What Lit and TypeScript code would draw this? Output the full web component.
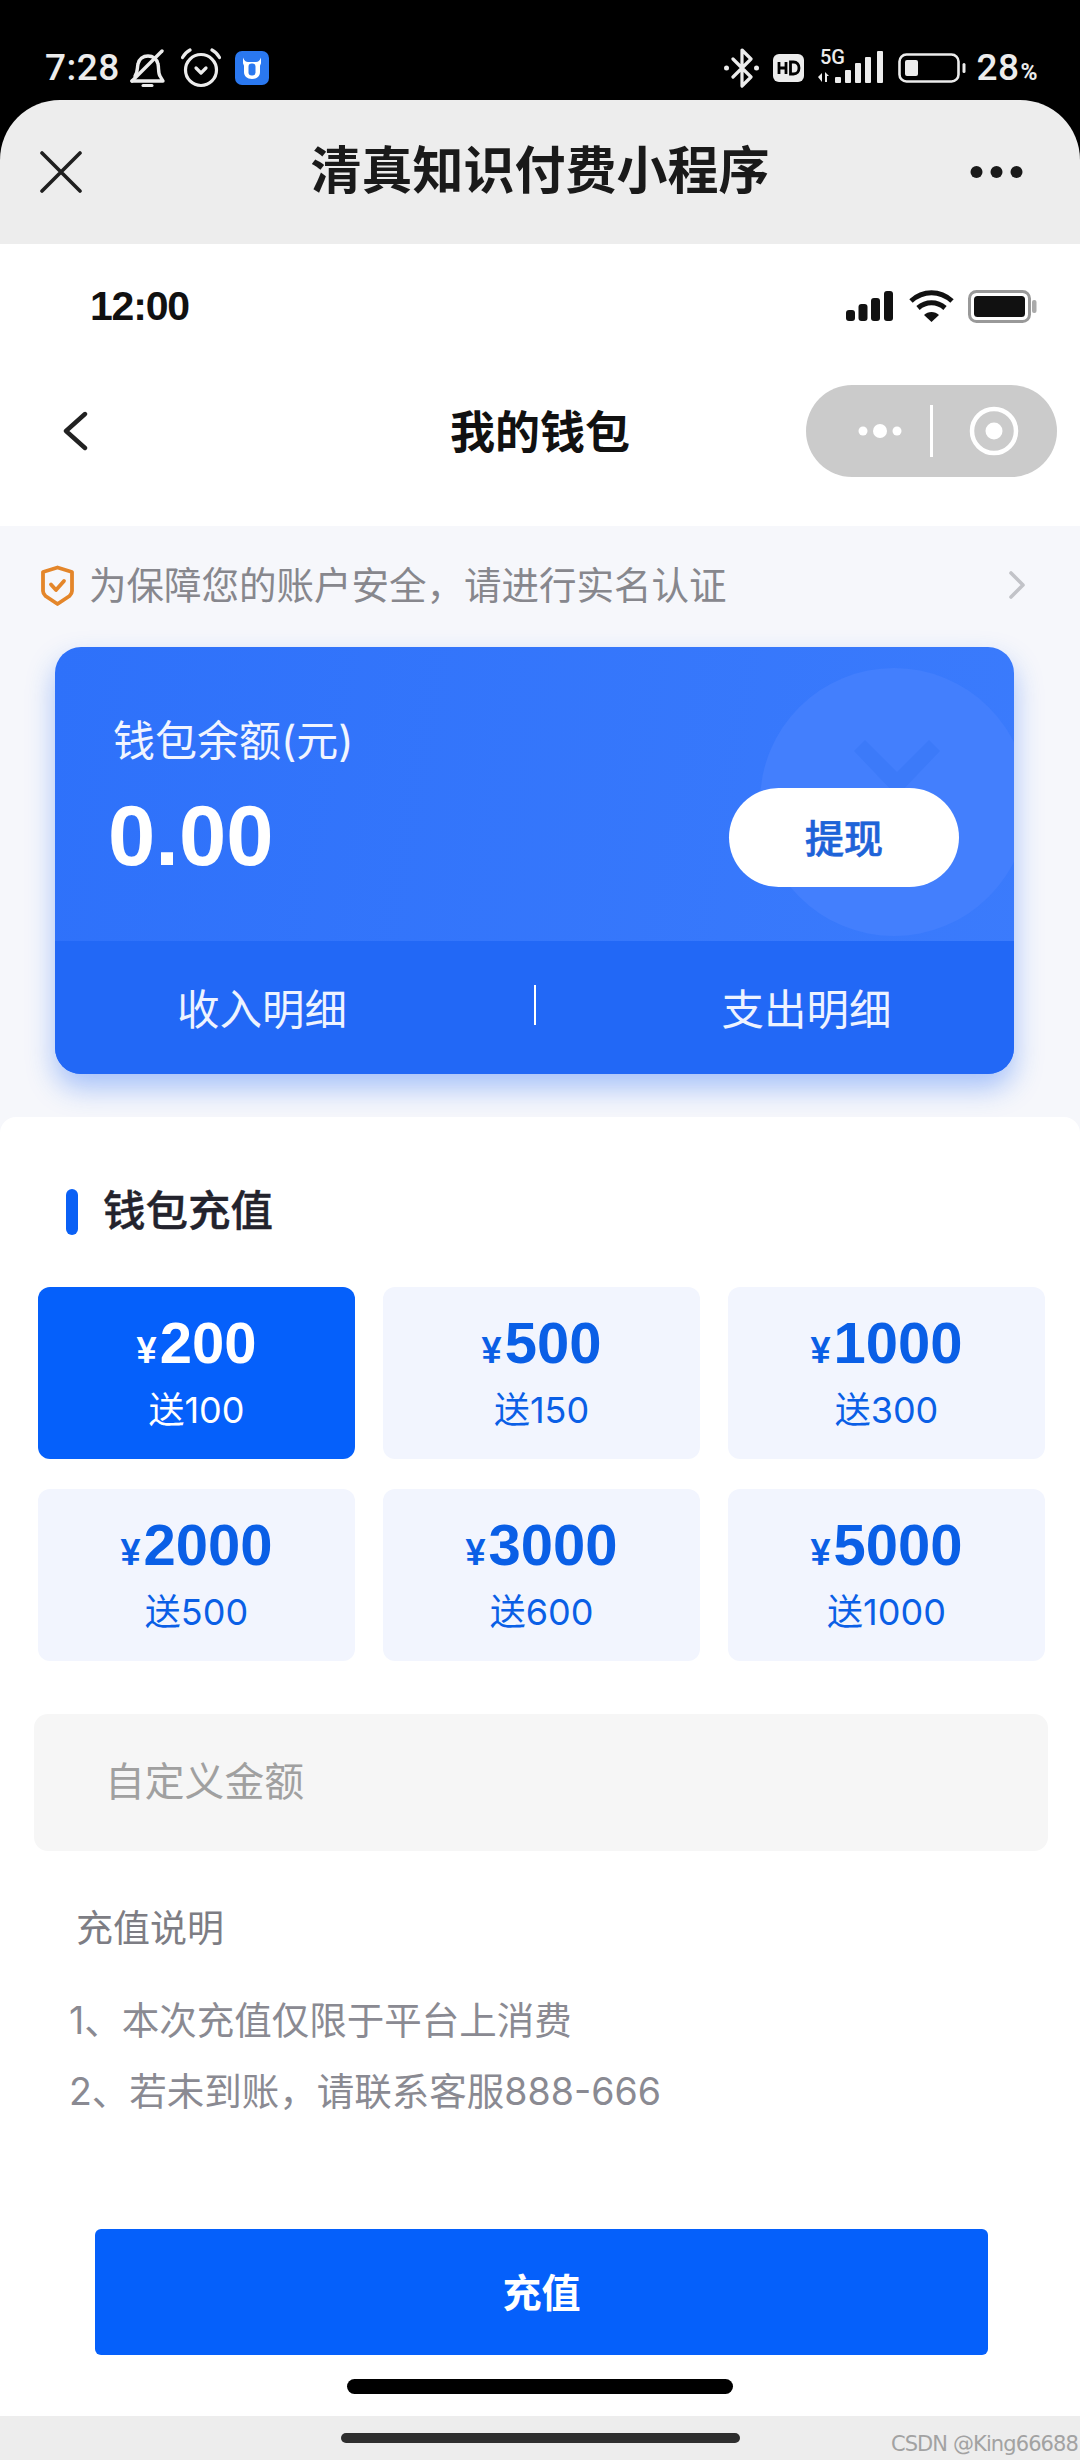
import { LitElement, html, css, svg } from "lit";
import { customElement } from "lit/decorators.js";

const tiles = [
  { amount: "200", gift: "送100", active: true },
  { amount: "500", gift: "送150" },
  { amount: "1000", gift: "送300" },
  { amount: "2000", gift: "送500" },
  { amount: "3000", gift: "送600" },
  { amount: "5000", gift: "送1000" },
];

@customElement("app-root")
export class AppRoot extends LitElement {
  static styles = css`
    :host { display: block; width: 1080px; height: 2460px; overflow: hidden; font-family: "Liberation Sans", "Noto Sans CJK SC", sans-serif; }
    * { box-sizing: border-box; }
    svg { display: block; flex: none; }
    .page { position: relative; height: 2460px; background: #000; display: flex; flex-direction: column; }

    .os { height: 100px; flex: none; display: flex; align-items: flex-start; padding-top: 48px; color: #ececec; }
    .os-time { font: 500 37px/40px Roboto, sans-serif; margin: 0 0 0 45px; width: 81px; letter-spacing: .5px; }
    .os-bell { margin-left: 4px; }
    .os-alarm { margin-left: 15px; }
    .os-app { margin: 3px 0 0 14px; }
    .os-spacer { flex: 1; }
    .os-bt { margin-right: 13px; }
    .os-hd { margin: 6px 12px 0 0; }
    .os-net { margin: -4px 14px 0 0; }
    .os-batt { margin: 5px 9px 0 0; }
    .os-pct { font: 500 37px/40px Roboto, sans-serif; margin: 0 42px 0 0; letter-spacing: .5px; display: flex; align-items: baseline; }
    .os-pct span { font-size: 23px; font-weight: 700; margin-left: 1px; }

    .sheet { flex: 1; background: #ededed; border-radius: 60px 60px 0 0; overflow: hidden; display: flex; flex-direction: column; }
    .sheet-head { height: 144px; flex: none; display: grid; grid-template-columns: 1fr auto 1fr; align-items: center; padding: 0 40px; }
    .sheet-title { font-size: 51px; font-weight: 700; color: #1a1a1a; line-height: 60px; }
    .sheet-more { justify-self: end; margin-right: 17px; }

    .mini { height: 2172px; flex: none; background: #fff; display: flex; flex-direction: column; }
    .mini-status { height: 124px; flex: none; display: flex; align-items: center; padding: 0 43px 0 90px; }
    .mini-time { font-size: 41px; font-weight: 700; letter-spacing: -1.2px; color: #111; flex: 1; line-height: 44px; }
    .mini-wifi { margin: 0 14px 0 16px; }

    .nav { margin-top: 17px; height: 92px; flex: none; display: grid; grid-template-columns: 1fr auto 1fr; align-items: center; padding: 0 23px; }
    .nav-back { margin-left: 40px; }
    .nav-title { font-size: 45px; font-weight: 700; color: #111; line-height: 54px; margin-top: 5px; }
    .capsule { justify-self: end; width: 251px; height: 92px; border-radius: 46px; background: #cbcbcb; display: flex; align-items: center; padding-left: 52px; }
    .capsule-line { width: 3px; height: 52px; background: #fff; margin: 0 0 0 28px; }
    .capsule-ring { margin-left: 36px; }

    .wallet { height: 607px; flex: none; margin-top: 49px; background: #f6f7fb; display: flex; flex-direction: column; }
    .tip { height: 118px; flex: none; display: flex; align-items: center; padding: 0 54px 0 41px; color: #87878d; font-size: 37.5px; }
    .tip-text { flex: 1; margin-left: 15px; line-height: 44px; padding-top: 2px; }
    .card { position: relative; margin: 3px 66px 0 55px; height: 427px; border-radius: 26px; background: linear-gradient(100deg, #2e71fa, #3b7bfc); color: #fff; display: flex; flex-direction: column; box-shadow: 0 14px 28px rgba(33, 104, 246, .38); }
    .card-top { position: relative; height: 294px; flex: none; overflow: hidden; border-radius: 26px 26px 0 0; display: flex; align-items: flex-end; justify-content: space-between; padding: 0 55px 54px 53px; }
    .deco { position: absolute; left: 705px; top: 21px; width: 268px; height: 268px; border-radius: 50%; background: #437ffd; }
    .deco-mark { position: absolute; left: 798px; top: 93px; }
    .card-info { position: relative; padding-bottom: 3px; }
    .card-label { font-family: Inter, "Noto Sans CJK SC", sans-serif; font-size: 42px; line-height: 48px; margin: 0 0 23px 5px; color: #f1f5ff; }
    .card-amount { font-size: 85px; font-weight: 700; line-height: 96px; }
    .withdraw { position: relative; width: 230px; height: 99px; border-radius: 50px; background: #fff; color: #1e63d8; font-size: 39px; font-weight: 500; -webkit-text-stroke: .7px #1e63d8; display: flex; align-items: center; justify-content: center; padding-bottom: 4px; }
    .card-foot { flex: 1; background: #2268f6; border-radius: 0 0 26px 26px; display: grid; grid-template-columns: 1fr 2px 1fr; font-size: 42.5px; color: #eef3ff; position: relative; }
    .foot-link { display: flex; align-items: center; padding-bottom: 3px; }
    .foot-left { justify-content: flex-start; padding-left: 122px; }
    .foot-right { justify-content: flex-start; padding-left: 186px; }
    .foot-line { align-self: start; width: 2px; height: 40px; background: #fff; margin-top: 44px; }

    .panel { position: relative; flex: 1; margin-top: -16px; background: #fff; border-radius: 16px 16px 0 0; display: flex; flex-direction: column; padding-top: 72px; }
    .section { display: flex; align-items: center; height: 46px; padding-left: 66px; }
    .section-bar { width: 12px; height: 46px; border-radius: 6px; background: #0a60f5; margin-right: 25px; }
    .section-text { font-size: 42.5px; font-weight: 500; -webkit-text-stroke: .4px #23232d; color: #23232d; line-height: 46px; }
    .tiles { margin: 52px 34px 0 38px; display: grid; grid-template-columns: repeat(3, 317px); grid-auto-rows: 172px; column-gap: 28px; row-gap: 30px; }
    .tile { border-radius: 12px; background: #f2f5fe; color: #0a5fe6; display: flex; flex-direction: column; align-items: center; padding-top: 23px; }
    .tile.active { background: #0560fb; color: #fff; }
    .tile-price { display: flex; align-items: baseline; height: 66px; line-height: 66px; font-size: 58px; font-weight: 700; }
    .tile-price span { font-size: 36px; margin-right: 3px; }
    .tile-gift { margin-top: 12px; font-family: Inter, "Noto Sans CJK SC", sans-serif; font-size: 36px; line-height: 44px; }

    .field { margin: 53px 32px 0 34px; height: 137px; flex: none; border-radius: 14px; background: #f6f6f6; color: #a0a0a0; font-size: 39.8px; display: flex; align-items: center; padding: 0 0 8px 71px; }
    .notes { padding-left: 76px; margin-top: 56px; height: 46px; font-size: 37px; line-height: 46px; color: #7d7d84; }
    .rule { margin-top: 44px; padding-left: 69px; font-family: Inter, "Noto Sans CJK SC", sans-serif; font-size: 37.5px; line-height: 48px; color: #8a8a92; }
    .rule + .rule { margin-top: 23px; }
    .pay { margin: 113px 92px 0 95px; height: 126px; flex: none; border-radius: 6px; background: #0560fb; color: #fff; font-size: 39px; font-weight: 700; display: flex; align-items: center; justify-content: center; padding-bottom: 4px; }
    .home { margin: 24px auto 0; width: 386px; height: 15px; border-radius: 8px; background: #000; }

    .sheet-foot { height: 44px; flex: none; display: flex; justify-content: center; padding: 17px 0 0 0; }
    .sheet-handle { width: 399px; height: 10px; border-radius: 5px; background: #2e2e2e; }
    .mark { position: absolute; right: 2px; bottom: 4px; font-size: 21px; line-height: 24px; color: #a2a2a2; font-family: "DejaVu Sans", sans-serif; letter-spacing: -.9px; }
  `;

  render() {
    const white = "#ececec";
    return html`<div class="page">
      <div class="os">
        <div class="os-time">7:28</div>
        <svg class="os-bell" width="36" height="40" viewBox="0 0 36 40" fill="none" stroke="${white}" stroke-width="3.4" stroke-linecap="round" stroke-linejoin="round">
          ${svg`<path d="M2 33h31l-3-5c-2-3-1-8-2-12-1-5-5-8-10-8S9 11 8 16c-1 4 0 8-3 12"/><path d="M2 33L32 3"/><path d="M13 37.500h9" stroke-width="3"/>`}
        </svg>
        <svg class="os-alarm" width="40" height="40" viewBox="0 0 40 40" fill="none" stroke="${white}" stroke-width="3.2" stroke-linecap="round" stroke-linejoin="round">
          ${svg`<circle cx="20" cy="22" r="15.500"/><path d="M1.500 9.500C3.500 6 6 3.500 9 2"/><path d="M38.500 9.500C36.500 6 34 3.500 31 2"/><path d="M15 20l5 5 5-5"/>`}
        </svg>
        <svg class="os-app" width="34" height="34" viewBox="0 0 34 34">
          ${svg`<rect width="34" height="34" rx="7" fill="#2a78f0"/><path d="M8 6.500c1 3 3 4.500 5 4.500h8c2 0 4-1.500 5-4.500v5.500c0 1-1 2-1 3v6c0 4-3 7-8 7s-8-3-8-7v-6c0-1-1-2-1-3z" fill="#fff"/><rect x="13.500" y="12.500" width="7" height="12" rx="3.200" fill="#2a78f0"/>`}
        </svg>
        <div class="os-spacer"></div>
        <svg class="os-bt" width="37" height="40" viewBox="0 0 37 40" fill="none" stroke="${white}" stroke-width="3.2" stroke-linecap="round" stroke-linejoin="round">
          ${svg`<path d="M10 11l18 18-9 9V2l9 9-18 18"/><circle cx="3.500" cy="20" r="2.500" fill="${white}" stroke="none"/><circle cx="33.500" cy="20" r="2.500" fill="${white}" stroke="none"/>`}
        </svg>
        <svg class="os-hd" width="31" height="28" viewBox="0 0 31 28">
          ${svg`<rect width="31" height="28" rx="6" fill="${white}"/><path d="M6 8v12M6 14h7M13 8v12M17.500 8v12h3c3.500 0 5.500-2.500 5.500-6s-2-6-5.500-6z" fill="none" stroke="#000" stroke-width="2.800"/>`}
        </svg>
        <svg class="os-net" width="68" height="40" viewBox="0 0 68 40" fill="${white}">
          ${svg`<text x="4" y="20" font-family="Roboto, sans-serif" font-size="20" font-weight="500">5G</text>
          <path d="M2 33l4-4v9zM9 28l4 4h-2v6H9z"/>
          <rect x="19" y="33" width="6" height="6" rx="1"/><rect x="29" y="26" width="6" height="13" rx="1"/><rect x="39" y="19" width="6" height="20" rx="1"/><rect x="49" y="13" width="6" height="26" rx="1"/><rect x="61" y="7" width="6" height="32" rx="1"/>`}
        </svg>
        <svg class="os-batt" width="69" height="30" viewBox="0 0 69 30">
          ${svg`<rect x="1.500" y="1.500" width="59" height="27" rx="7" fill="none" stroke="${white}" stroke-width="2.600"/><rect x="7" y="7" width="13" height="16" rx="2" fill="${white}"/><rect x="64.500" y="10" width="3" height="10" rx="1.500" fill="${white}"/>`}
        </svg>
        <div class="os-pct">28<span>%</span></div>
      </div>

      <div class="sheet">
        <div class="sheet-head">
          <svg width="42" height="42" viewBox="0 0 42 42" fill="none" stroke="#1f1f1f" stroke-width="3.600" stroke-linecap="round">
            ${svg`<path d="M2 2l38 38M40 2L2 40"/>`}
          </svg>
          <div class="sheet-title">清真知识付费小程序</div>
          <svg class="sheet-more" width="53" height="14" viewBox="0 0 53 14" fill="#1a1a1a">
            ${svg`<circle cx="6.500" cy="7" r="6"/><circle cx="26.500" cy="7" r="6"/><circle cx="46.500" cy="7" r="6"/>`}
          </svg>
        </div>

        <div class="mini">
          <div class="mini-status">
            <div class="mini-time">12:00</div>
            <svg width="47" height="30" viewBox="0 0 47 30" fill="#111">
              ${svg`<rect x="0" y="19" width="9" height="11" rx="3"/><rect x="12.500" y="13" width="9" height="17" rx="3"/><rect x="25" y="7" width="9" height="23" rx="3"/><rect x="38" y="0" width="9" height="30" rx="3"/>`}
            </svg>
            <svg class="mini-wifi" width="45" height="32" viewBox="0 0 45 32" fill="none" stroke="#111" stroke-width="5">
              ${svg`<path d="M2 11C14 0 31 0 43 11"/><path d="M9 18c8-7 19-7 27 0"/><path d="M15 25l7.500 7 7.500-7c-4-4-11-4-15 0z" fill="#111" stroke="none"/>`}
            </svg>
            <svg width="69" height="33" viewBox="0 0 69 33">
              ${svg`<rect x="1.500" y="1.500" width="60" height="30" rx="7" fill="#fff" stroke="#999" stroke-width="3"/><rect x="6" y="6" width="51" height="21" rx="3.500" fill="#111"/><rect x="64" y="10" width="4.500" height="13" rx="2" fill="#aaa"/>`}
            </svg>
          </div>

          <div class="nav">
            <svg class="nav-back" width="25" height="40" viewBox="0 0 25 40" fill="none" stroke="#222" stroke-width="4.400" stroke-linecap="round" stroke-linejoin="round">
              ${svg`<path d="M22 3L3 20l19 17"/>`}
            </svg>
            <div class="nav-title">我的钱包</div>
            <div class="capsule">
              <svg width="44" height="22" viewBox="0 0 44 22" fill="#fff">
                ${svg`<circle cx="5" cy="11" r="4.500"/><circle cx="22" cy="11" r="7"/><circle cx="39" cy="11" r="4.500"/>`}
              </svg>
              <div class="capsule-line"></div>
              <svg class="capsule-ring" width="50" height="50" viewBox="0 0 50 50">
                ${svg`<circle cx="25" cy="25" r="22" fill="none" stroke="#fff" stroke-width="4.500"/><circle cx="25" cy="25" r="8.500" fill="#fff"/>`}
              </svg>
            </div>
          </div>

          <div class="wallet">
            <div class="tip">
              <svg width="33" height="41" viewBox="0 0 33 41" fill="none" stroke="#e4862a" stroke-width="3.800" stroke-linejoin="round" stroke-linecap="round">
                ${svg`<path d="M16.500 2.500L31 7v19c0 2-1 3.500-2.500 5L16.500 39l-12-8C3 29.500 2 28 2 26V7z"/><path d="M10 19.500l5 5.500 8-9"/>`}
              </svg>
              <div class="tip-text">为保障您的账户安全，请进行实名认证</div>
              <svg width="18" height="30" viewBox="0 0 18 30" fill="none" stroke="#c2c3c8" stroke-width="3.600" stroke-linecap="round" stroke-linejoin="round">
                ${svg`<path d="M3 3l12 12L3 27"/>`}
              </svg>
            </div>

            <div class="card">
              <div class="card-top">
                <div class="deco"></div>
                <svg class="deco-mark" width="88" height="56" viewBox="0 0 88 56" fill="#3c7af9">
                  ${svg`<path d="M1 11L12 0l32 32L76 0l11 11-43 45z"/>`}
                </svg>
                <div class="card-info">
                  <div class="card-label">钱包余额(元)</div>
                  <div class="card-amount">0.00</div>
                </div>
                <div class="withdraw">提现</div>
              </div>
              <div class="card-foot">
                <div class="foot-link foot-left">收入明细</div>
                <div class="foot-line"></div>
                <div class="foot-link foot-right">支出明细</div>
              </div>
            </div>
          </div>

          <div class="panel">
            <div class="section"><div class="section-bar"></div><div class="section-text">钱包充值</div></div>
            <div class="tiles">
              ${tiles.map((t) => html`<div class="tile ${t.active ? "active" : ""}">
                <div class="tile-price"><span>¥</span>${t.amount}</div>
                <div class="tile-gift">${t.gift}</div>
              </div>`)}
            </div>
            <div class="field">自定义金额</div>
            <div class="notes">充值说明</div>
            <div class="rule">1、本次充值仅限于平台上消费</div>
            <div class="rule">2、若未到账，请联系客服888-666</div>
            <div class="pay">充值</div>
            <div class="home"></div>
          </div>
        </div>

        <div class="sheet-foot"><div class="sheet-handle"></div></div>
      </div>
      <div class="mark">CSDN @King66688</div>
    </div>`;
  }
}
